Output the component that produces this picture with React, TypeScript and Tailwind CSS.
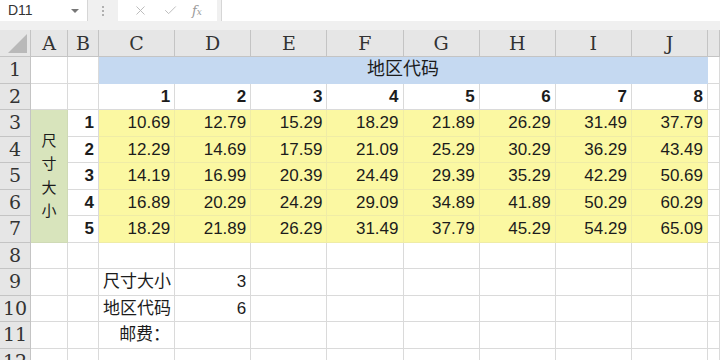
import React from 'react';
import { X, Check } from 'lucide-react';

const COLS = ['A', 'B', 'C', 'D', 'E', 'F', 'G', 'H', 'I', 'J', ''];

const PRICES: string[][] = [
    ['10.69', '12.79', '15.29', '18.29', '21.89', '26.29', '31.49', '37.79'],
    ['12.29', '14.69', '17.59', '21.09', '25.29', '30.29', '36.29', '43.49'],
    ['14.19', '16.99', '20.39', '24.49', '29.39', '35.29', '42.29', '50.69'],
    ['16.89', '20.29', '24.29', '29.09', '34.89', '41.89', '50.29', '60.29'],
    ['18.29', '21.89', '26.29', '31.49', '37.79', '45.29', '54.29', '65.09'],
];

const cellFont = { fontFamily: '"Liberation Sans", "Noto Sans CJK SC", sans-serif' };
const headFont = { fontFamily: '"DejaVu Serif", "Liberation Serif", serif' };

// 普通单元格
const Cell: React.FC<{ className?: string; children?: React.ReactNode }> = ({ className = '', children }) => (
    <div className={`border-r border-b border-[#dadada] flex items-center px-1 text-[17px] text-[#1c1c1c] leading-none whitespace-nowrap overflow-hidden ${className}`}>
        {children}
    </div>
);

const RowHead: React.FC<{ n: number }> = ({ n }) => (
    <div
        className="bg-[#e6e6e6] border-r border-b border-[#c4c4c4] flex items-center justify-center text-[19px] text-[#333] leading-none"
        style={headFont}
    >
        {n}
    </div>
);

const App: React.FC = () => {
    return (
        <div className="w-[720px] h-[360px] overflow-hidden bg-white flex flex-col" style={cellFont}>
            {/* Formula bar */}
            <div className="h-[30px] bg-[#f0f0f0] flex items-start flex-shrink-0">
                <div className="w-[88px] h-[21px] bg-white flex items-center justify-between pl-2 pr-2 border-r border-[#d6d6d6]">
                    <span className="text-[14px] text-[#333]">D11</span>
                    <span className="w-0 h-0 border-l-[4px] border-r-[4px] border-t-[4px] border-l-transparent border-r-transparent border-t-[#777]" />
                </div>
                <div className="w-[30px] h-[21px] flex flex-col items-center justify-center gap-[2px]">
                    <span className="w-[2px] h-[2px] bg-[#b0b0b0]" />
                    <span className="w-[2px] h-[2px] bg-[#b0b0b0]" />
                    <span className="w-[2px] h-[2px] bg-[#b0b0b0]" />
                </div>
                <div className="w-[99px] h-[21px] bg-white flex items-center justify-around px-2">
                    <X size={15} strokeWidth={1.5} color="#b9b9b9" />
                    <Check size={15} strokeWidth={1.5} color="#b9b9b9" />
                    <span className="text-[13px] italic text-[#9a9a9a]" style={headFont}>
                        f<span className="text-[9px]">x</span>
                    </span>
                </div>
                <div className="w-[4px]" />
                <div className="flex-1 h-[21px] bg-white border-l border-[#d6d6d6]" />
            </div>

            {/* Sheet */}
            <div className="grid grid-cols-[31px_37px_31px_repeat(8,76.125px)_1fr] grid-rows-[27px_repeat(12,26.5px)]">
                {/* Corner */}
                <div className="bg-[#e6e6e6] border-r border-b border-[#c4c4c4] relative">
                    <svg className="absolute right-[3px] bottom-[3px]" width="19" height="19" viewBox="0 0 19 19">
                        <polygon points="19,0 19,19 0,19" fill="#b9b9b9" />
                    </svg>
                </div>
                {COLS.map((c, i) => (
                    <div
                        key={i}
                        className="bg-[#e6e6e6] border-r border-b border-[#c4c4c4] flex items-center justify-center text-[19px] text-[#333] leading-none"
                        style={headFont}
                    >
                        {c}
                    </div>
                ))}

                {/* Row 1 */}
                <RowHead n={1} />
                <Cell />
                <Cell />
                <div className="col-span-8 bg-[#c5d9f1] border-b border-r border-[#c5d9f1] flex items-center justify-center text-[18px] text-[#1c1c1c]">
                    地区代码
                </div>
                <Cell />

                {/* Row 2 */}
                <RowHead n={2} />
                <Cell />
                <Cell />
                {[1, 2, 3, 4, 5, 6, 7, 8].map((n) => (
                    <Cell key={n} className="justify-end font-bold">{n}</Cell>
                ))}
                <Cell />

                {/* Rows 3-7 */}
                {PRICES.map((row, r) => (
                    <React.Fragment key={r}>
                        <RowHead n={r + 3} />
                        {r === 0 && (
                            <div className="row-span-5 bg-[#d8e4bc] border-r border-b border-[#cfdab6] flex flex-col items-center justify-center text-[15px] leading-[23.5px] text-[#1c1c1c]">
                                <span>尺</span>
                                <span>寸</span>
                                <span>大</span>
                                <span>小</span>
                            </div>
                        )}
                        <Cell className="justify-end font-bold">{r + 1}</Cell>
                        {row.map((v, i) => (
                            <div
                                key={i}
                                className="bg-[#fbf8a2] border-r border-b border-[#efeca6] flex items-center justify-end px-1 text-[17px] text-[#1c1c1c] leading-none"
                            >
                                {v}
                            </div>
                        ))}
                        <Cell />
                    </React.Fragment>
                ))}

                {/* Rows 8-12 */}
                {[8, 9, 10, 11, 12].map((n) => (
                    <React.Fragment key={n}>
                        <RowHead n={n} />
                        <Cell />
                        <Cell />
                        <Cell className={n === 11 ? 'justify-end text-[15px]' : 'text-[15px]'}>
                            {n === 9 ? '尺寸大小' : n === 10 ? '地区代码' : n === 11 ? '邮费：' : ''}
                        </Cell>
                        <Cell className="justify-end">{n === 9 ? '3' : n === 10 ? '6' : ''}</Cell>
                        {[0, 1, 2, 3, 4, 5].map((i) => (
                            <Cell key={i} />
                        ))}
                        <Cell />
                    </React.Fragment>
                ))}
            </div>
        </div>
    );
};

export default App;
